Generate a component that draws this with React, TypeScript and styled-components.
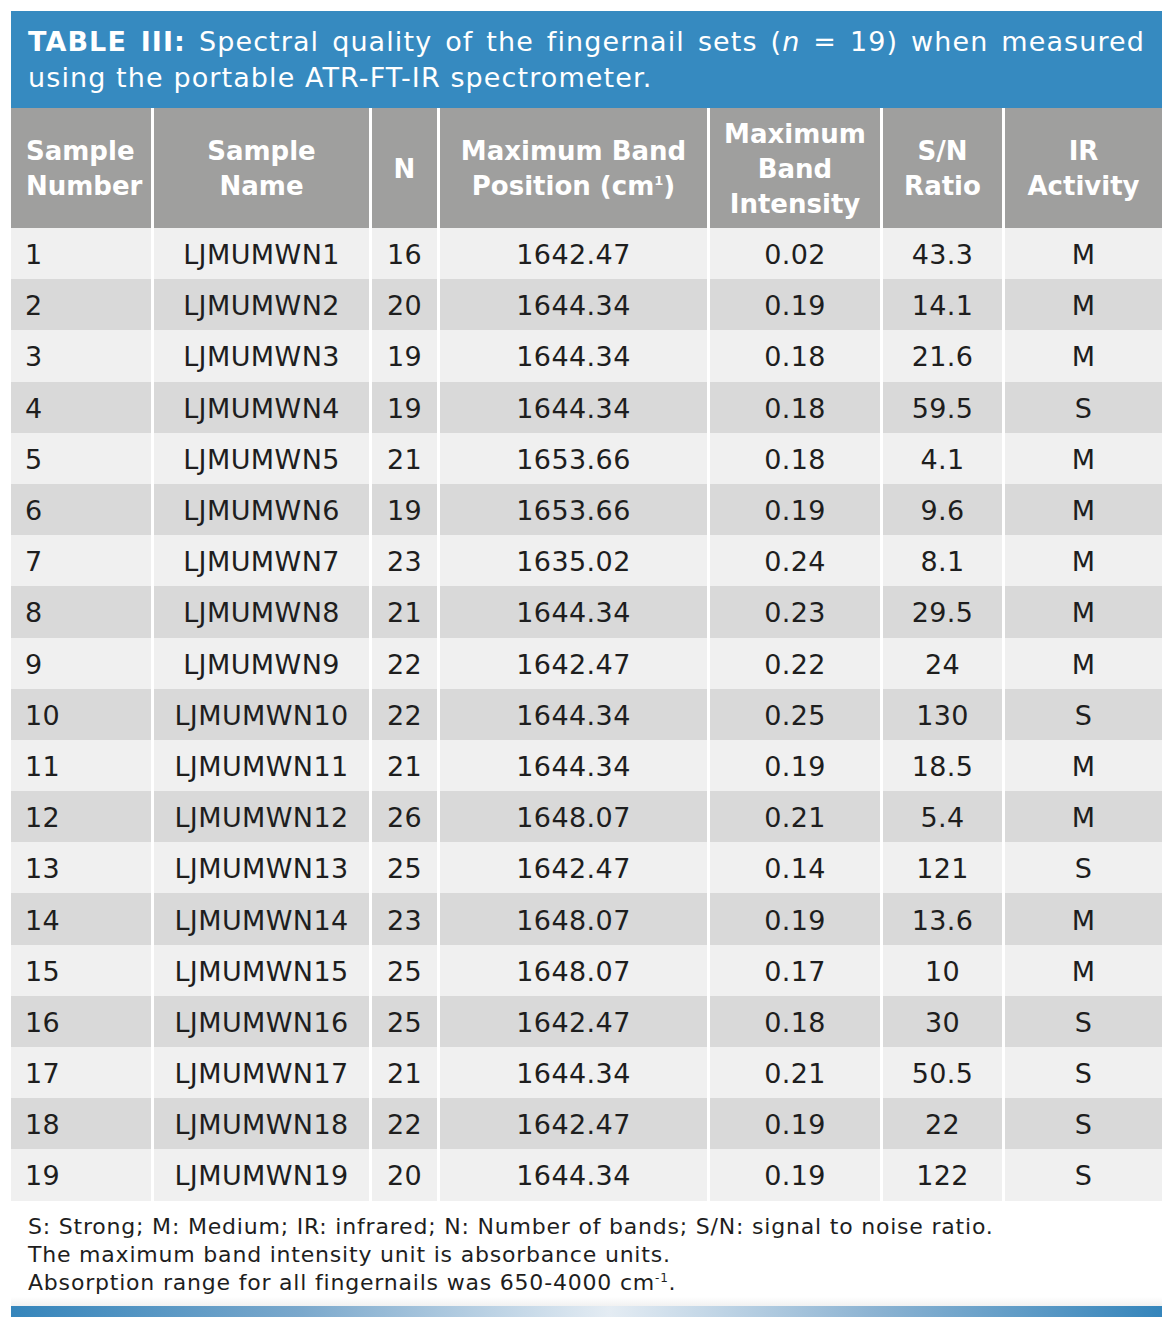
import React from "react";
import styled, { createGlobalStyle } from "styled-components";

const GlobalStyle = createGlobalStyle`
    body {
        margin: 0;
        background: #ffffff;
        font-family: "DejaVu Sans", "Liberation Sans", sans-serif;
    }
`;

const Page = styled.div`
    width: 1151px;
    padding: 11px 0 0 11px;
`;

const TitleBar = styled.div`
    background: #368ac0;
    color: #ffffff;
    height: 97px;
    box-sizing: border-box;
    padding: 13px 17px 0 17px;
    font-size: 27px;
    line-height: 36px;
    letter-spacing: 1.1px;
`;

const TitleLine = styled.div<{ $justify?: boolean }>`
    text-align: ${(p) => (p.$justify ? "justify" : "left")};
    text-align-last: ${(p) => (p.$justify ? "justify" : "left")};
    white-space: nowrap;
`;

const TitleLabel = styled.span`
    font-weight: bold;
`;

const Grid = styled.div`
    display: grid;
    grid-template-columns: 140px 215px 65px 267px 170px 119px 157px;
    grid-template-rows: 120px;
    grid-auto-rows: 51.2px;
    column-gap: 3px;
    background: #ffffff;
`;

const HeadCell = styled.div<{ $left?: boolean }>`
    background: #9f9f9e;
    color: #ffffff;
    font-weight: bold;
    font-size: 26px;
    line-height: 35px;
    display: flex;
    flex-direction: column;
    justify-content: center;
    align-items: ${(p) => (p.$left ? "flex-start" : "center")};
    text-align: ${(p) => (p.$left ? "left" : "center")};
    padding-left: ${(p) => (p.$left ? "15px" : "0")};
    padding-top: 2px;
    box-sizing: border-box;
    sup {
        font-size: 13px;
        line-height: 0;
    }
`;

const Cell = styled.div<{ $alt: boolean; $left?: boolean }>`
    background: ${(p) => (p.$alt ? "#d9d9d9" : "#f0f0f0")};
    color: #1e1e1e;
    font-size: 27px;
    letter-spacing: 0.4px;
    display: flex;
    align-items: center;
    justify-content: ${(p) => (p.$left ? "flex-start" : "center")};
    padding-left: ${(p) => (p.$left ? "14px" : "0")};
    padding-top: 2px;
    box-sizing: border-box;
`;

const Notes = styled.div`
    padding: 12px 0 0 17px;
    font-size: 22px;
    line-height: 28px;
    letter-spacing: 0.8px;
    color: #1e1e1e;
    sup {
        font-size: 12px;
        line-height: 0;
    }
`;

const Shade = styled.div`
    height: 9px;
    background: linear-gradient(to bottom, #ffffff, #f1f1f1);
`;

const BottomBar = styled.div`
    height: 11px;
    background: linear-gradient(
        to right,
        #3585bb 0%,
        #7aa8cc 25%,
        #e4ecf3 52%,
        #8cb3d2 75%,
        #3585bb 100%
    );
`;

type Row = [string, string, string, string, string, string, string];

const rows: Row[] = [
    ["1", "LJMUMWN1", "16", "1642.47", "0.02", "43.3", "M"],
    ["2", "LJMUMWN2", "20", "1644.34", "0.19", "14.1", "M"],
    ["3", "LJMUMWN3", "19", "1644.34", "0.18", "21.6", "M"],
    ["4", "LJMUMWN4", "19", "1644.34", "0.18", "59.5", "S"],
    ["5", "LJMUMWN5", "21", "1653.66", "0.18", "4.1", "M"],
    ["6", "LJMUMWN6", "19", "1653.66", "0.19", "9.6", "M"],
    ["7", "LJMUMWN7", "23", "1635.02", "0.24", "8.1", "M"],
    ["8", "LJMUMWN8", "21", "1644.34", "0.23", "29.5", "M"],
    ["9", "LJMUMWN9", "22", "1642.47", "0.22", "24", "M"],
    ["10", "LJMUMWN10", "22", "1644.34", "0.25", "130", "S"],
    ["11", "LJMUMWN11", "21", "1644.34", "0.19", "18.5", "M"],
    ["12", "LJMUMWN12", "26", "1648.07", "0.21", "5.4", "M"],
    ["13", "LJMUMWN13", "25", "1642.47", "0.14", "121", "S"],
    ["14", "LJMUMWN14", "23", "1648.07", "0.19", "13.6", "M"],
    ["15", "LJMUMWN15", "25", "1648.07", "0.17", "10", "M"],
    ["16", "LJMUMWN16", "25", "1642.47", "0.18", "30", "S"],
    ["17", "LJMUMWN17", "21", "1644.34", "0.21", "50.5", "S"],
    ["18", "LJMUMWN18", "22", "1642.47", "0.19", "22", "S"],
    ["19", "LJMUMWN19", "20", "1644.34", "0.19", "122", "S"],
];

export default function App() {
    return (
        <>
            <GlobalStyle />
            <Page>
                <TitleBar>
                    <TitleLine $justify>
                        <TitleLabel>TABLE III:</TitleLabel> Spectral quality of the
                        fingernail sets (<i>n</i> = 19) when measured
                    </TitleLine>
                    <TitleLine>using the portable ATR-FT-IR spectrometer.</TitleLine>
                </TitleBar>
                <Grid>
                    <HeadCell $left>
                        <span>Sample</span>
                        <span>Number</span>
                    </HeadCell>
                    <HeadCell>
                        <span>Sample</span>
                        <span>Name</span>
                    </HeadCell>
                    <HeadCell>N</HeadCell>
                    <HeadCell>
                        <span>Maximum Band</span>
                        <span>
                            Position (cm<sup>1</sup>)
                        </span>
                    </HeadCell>
                    <HeadCell>
                        <span>Maximum</span>
                        <span>Band</span>
                        <span>Intensity</span>
                    </HeadCell>
                    <HeadCell>
                        <span>S/N</span>
                        <span>Ratio</span>
                    </HeadCell>
                    <HeadCell>
                        <span>IR</span>
                        <span>Activity</span>
                    </HeadCell>
                    {rows.map((row, i) =>
                        row.map((value, j) => (
                            <Cell key={`${i}-${j}`} $alt={i % 2 === 1} $left={j === 0}>
                                {value}
                            </Cell>
                        ))
                    )}
                </Grid>
                <Notes>
                    <div>
                        S: Strong; M: Medium; IR: infrared; N: Number of bands; S/N:
                        signal to noise ratio.
                    </div>
                    <div>The maximum band intensity unit is absorbance units.</div>
                    <div>
                        Absorption range for all fingernails was 650-4000 cm
                        <sup>-1</sup>.
                    </div>
                </Notes>
                <Shade />
                <BottomBar />
            </Page>
        </>
    );
}
